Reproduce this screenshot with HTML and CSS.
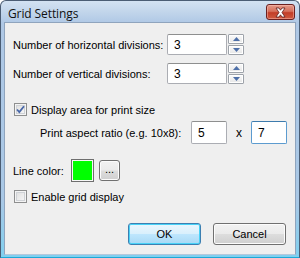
FILE: index.html
```html
<!DOCTYPE html>
<html>
<head>
<meta charset="utf-8">
<link rel="stylesheet" href="styles.css">
</head>
<body>
<div class="window">
  <div class="titlebar">
    <span class="title">Grid Settings</span>
    <div class="close">
      <svg width="17" height="11" viewBox="0 0 17 11"><path d="M4 1h3l1.5 2.2L10 1h3L10 5.5 13 10h-3L8.5 7.8 7 10H4l3-4.5z" fill="#fff" stroke="#5a1a1a" stroke-width="0.8" stroke-linejoin="round"/></svg>
    </div>
  </div>
  <div class="client">
    <div class="grid">
      <label class="lbl">Number of horizontal divisions:</label>
      <div class="input">3</div>
      <div class="spin">
        <div class="sbtn"><svg width="7" height="4" viewBox="0 0 7 4"><path d="M0 4L3.5 0 7 4z" fill="#4d6fa8"/></svg></div>
        <div class="sbtn"><svg width="7" height="4" viewBox="0 0 7 4"><path d="M0 0L3.5 4 7 0z" fill="#4d6fa8"/></svg></div>
      </div>
      <label class="lbl">Number of vertical divisions:</label>
      <div class="input">3</div>
      <div class="spin">
        <div class="sbtn"><svg width="7" height="4" viewBox="0 0 7 4"><path d="M0 4L3.5 0 7 4z" fill="#4d6fa8"/></svg></div>
        <div class="sbtn"><svg width="7" height="4" viewBox="0 0 7 4"><path d="M0 0L3.5 4 7 0z" fill="#4d6fa8"/></svg></div>
      </div>
    </div>

    <div class="check-row first">
      <span class="box checked"><svg width="9" height="9" viewBox="0 0 9 9"><path d="M1 4.5l2.3 2.5L8 1.2" fill="none" stroke="#4867a8" stroke-width="1.8"/></svg></span>
      <span>Display area for print size</span>
    </div>

    <div class="ratio-row">
      <span class="lbl ratio-lbl">Print aspect ratio (e.g. 10x8):</span>
      <div class="input small">5</div>
      <span class="times">x</span>
      <div class="input small focus">7</div>
    </div>

    <div class="color-row">
      <span class="lbl">Line color:</span>
      <span class="swatch"><span class="swatch-in"></span></span>
      <span class="btn dots">...</span>
    </div>

    <div class="check-row second">
      <span class="box"></span>
      <span>Enable grid display</span>
    </div>

    <div class="buttons">
      <span class="btn push default">OK</span>
      <span class="btn push">Cancel</span>
    </div>
  </div>
</div>
</body>
</html>
```
FILE: styles.css
```css
* { box-sizing: border-box; }
html, body { margin: 0; padding: 0; }
body {
  width: 300px;
  height: 258px;
  background: #fff;
  font-family: "Liberation Sans", Tahoma, sans-serif;
  font-size: 11px;
  color: #000;
}
.window {
  width: 300px;
  height: 258px;
  display: flex;
  flex-direction: column;
  border: 1px solid #4b5d74;
  border-bottom-color: #1ba9d8;
  border-radius: 6px 6px 0 0;
  background: linear-gradient(to bottom, #d3e2f2 0px, #c0d4ea 12px, #afc8e5 22px, #a9c8e6 200px, #7fd0ef 258px);
  padding: 0 3px 2px 3px;
}
.titlebar {
  height: 21px;
  flex: none;
  display: flex;
  align-items: flex-start;
  justify-content: space-between;
  padding-left: 4px;
}
.title {
  font-family: "Open Sans", "Noto Sans", sans-serif;
  font-size: 12px;
  line-height: 14px;
  margin-top: 6px;
  color: #111;
  letter-spacing: -0.1px;
}
.close {
  margin-top: 3px;
  margin-right: 1px;
  width: 29px;
  height: 16px;
  border: 1px solid #6b2020;
  border-radius: 3px;
  background: linear-gradient(to bottom, #e49a8a 0%, #d6705c 45%, #c23d28 55%, #cf5a40 100%);
  display: flex;
  align-items: center;
  justify-content: center;
  box-shadow: inset 0 0 0 1px rgba(255,200,190,0.45);
}
.close svg { display: block; }
.client {
  flex: 1;
  background: #efefef;
  border: 1px solid #8fa4bd;
  border-bottom-color: #b4c8dc;
  padding: 11px 0 0 8px;
  display: flex;
  flex-direction: column;
}
.grid {
  display: grid;
  grid-template-columns: 154px 60px 17px;
  grid-auto-rows: 21px;
  row-gap: 8px;
  align-items: center;
}
.lbl { white-space: nowrap; }
.input {
  height: 21px;
  border: 1px solid #abadb3;
  border-top-color: #8e8f8f;
  border-radius: 2px;
  background: #fff;
  padding: 0 0 0 6px;
  display: flex;
  align-items: center;
  font-size: 12px;
}
.spin {
  display: flex;
  flex-direction: column;
  gap: 1px;
  padding-left: 1px;
  height: 21px;
}
.sbtn {
  width: 16px;
  height: 10px;
  border: 1px solid #9ea3aa;
  border-radius: 1px;
  background: linear-gradient(to bottom, #fafafa, #e6e6e6);
  box-shadow: inset 0 0 0 1px #fff;
  display: flex;
  align-items: center;
  justify-content: center;
}
.sbtn svg { display: block; }
.check-row {
  display: flex;
  align-items: center;
  gap: 4px;
  padding-left: 1px;
  height: 13px;
}
.check-row.first { margin-top: 19px; }
.check-row.second { margin-top: 8px; }
.box {
  width: 13px;
  height: 13px;
  border: 1px solid #8e8f8f;
  background: linear-gradient(135deg, #dcdcdc, #fafafa);
  box-shadow: inset 0 0 0 1px #f4f4f4, inset 0 0 0 2px #cfd2d6;
  display: flex;
  align-items: center;
  justify-content: center;
}
.box svg { display: block; }
.ratio-row {
  display: flex;
  align-items: center;
  margin-top: 5px;
  padding-left: 27px;
  height: 23px;
}
.ratio-lbl { width: 151px; }
.input.small { width: 36px; height: 23px; }
.input.focus { border-color: #5c9bcf; border-top-color: #3d7bad; }
.times { width: 24px; padding-left: 9px; font-size: 12px; }
.color-row {
  display: flex;
  align-items: center;
  margin-top: 15px;
  height: 23px;
}
.color-row .lbl { width: 58px; }
.swatch {
  width: 23px;
  height: 23px;
  border: 1px solid #6e6e6e;
  background: #f7f7f7;
  padding: 1px;
  display: flex;
}
.swatch-in { flex: 1; background: #00ff00; }
.btn {
  display: flex;
  align-items: center;
  justify-content: center;
  border: 1px solid #707070;
  border-radius: 3px;
  background: linear-gradient(to bottom, #f2f2f2 0%, #ebebeb 48%, #dddddd 52%, #cfcfcf 100%);
  box-shadow: inset 0 0 0 1px #fcfcfc;
}
.dots {
  width: 21px;
  height: 21px;
  margin-left: 5px;
  font-size: 11px;
  line-height: 1;
  padding-bottom: 2px;
}
.buttons {
  display: flex;
  justify-content: flex-end;
  gap: 12px;
  margin-top: 20px;
  padding-right: 9px;
}
.push { width: 73px; height: 22px; }
.push.default {
  border-color: #3c7fb1;
  background: linear-gradient(to bottom, #eaf6fd 0%, #d9f0fc 48%, #bee6fd 52%, #a7d9f5 100%);
  box-shadow: inset 0 0 0 1px #48d2f7;
}
```
